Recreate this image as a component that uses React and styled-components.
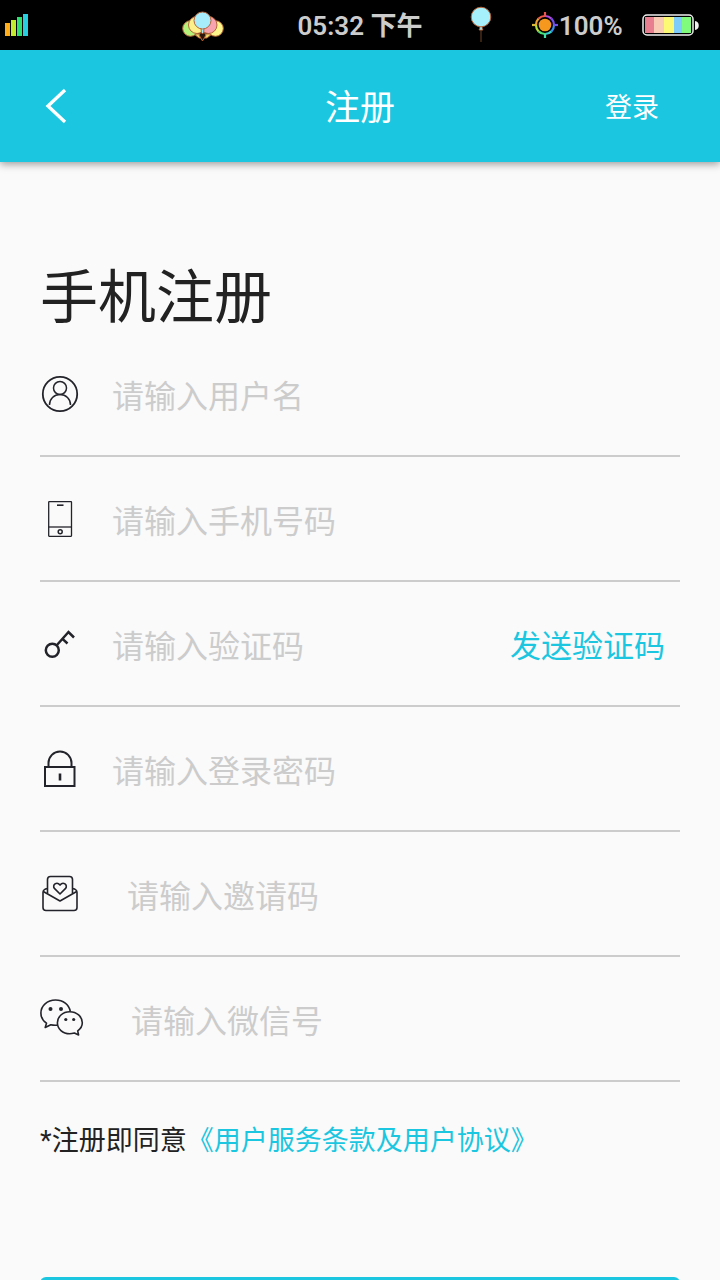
import React, { useState } from "react";
import styled, { createGlobalStyle } from "styled-components";

// ================= STYLES =================

const GlobalStyle = createGlobalStyle`
  * {
    box-sizing: border-box;
  }

  html {
    scrollbar-width: none;
  }

  body {
    margin: 0;
    background: #fafafa;
    color: #222;
    font-family: Roboto, "Noto Sans CJK SC", sans-serif;
  }

  button,
  input {
    font-family: inherit;
  }
`;

const Screen = styled.div`
  min-height: 100vh;
  display: flex;
  flex-direction: column;
  background: #fafafa;
`;

// Status bar
const StatusBar = styled.div`
  flex: none;
  height: 50px;
  display: grid;
  grid-template-columns: 1fr auto 1fr;
  align-items: center;
  background: #000;
  color: #ccc;
  font-size: 26px;
  font-weight: 600;
  line-height: 32px;
`;

const StatusLeft = styled.div`
  display: flex;
  align-items: center;
  justify-content: space-between;
  padding: 0 74px 0 4px;
`;

const StatusRight = styled.div`
  display: flex;
  align-items: center;
  justify-content: space-between;
  padding: 0 20px 0 48px;
`;

const StatusTime = styled.span`
  padding-top: 2px;
`;

const Brightness = styled.span`
  display: flex;
  align-items: center;
  gap: 1px;
  padding-left: 20px;
`;

const Glyph = styled.svg`
  display: block;
  flex: none;
`;

// Header
const Header = styled.header`
  flex: none;
  height: 112px;
  display: grid;
  grid-template-columns: 1fr auto 1fr;
  align-items: center;
  background: #1ac6e0;
  color: #fff;
  box-shadow: 0 2px 8px rgba(0, 0, 0, 0.4);
  z-index: 1;
`;

const BackButton = styled.button`
  justify-self: start;
  margin-left: 44px;
  padding: 0;
  border: none;
  background: none;
  color: inherit;
  cursor: pointer;
`;

const Title = styled.h1`
  margin: 0;
  padding-top: 5px;
  font-size: 35px;
  font-weight: 400;
  line-height: 48px;
`;

const LoginLink = styled.a`
  justify-self: end;
  margin-right: 61px;
  padding-top: 3px;
  color: inherit;
  font-size: 27px;
  line-height: 40px;
  text-decoration: none;
`;

// Form
const Form = styled.form`
  padding: 102px 40px 40px;
`;

const Heading = styled.h2`
  margin: 0;
  font-size: 58px;
  font-weight: 400;
  line-height: 68px;
`;

const Field = styled.div`
  height: 125px;
  display: flex;
  align-items: center;
  border-bottom: 2px solid #ccc;
`;

const FieldLabel = styled.label`
  flex: none;
  margin-right: ${(props) => (props.$wide ? "47px" : "32px")};
  color: #23232b;
`;

const FieldInput = styled.input`
  flex: 1;
  min-width: 0;
  height: 60px;
  padding: 6px 0 0;
  border: none;
  outline: none;
  background: none;
  color: #222;
  font-size: 32px;

  &::placeholder {
    color: #ccc;
    opacity: 1;
  }
`;

const CodeButton = styled.button`
  flex: none;
  padding: 6px 15px 0;
  border: none;
  background: none;
  color: #1ac6e0;
  font-size: 31px;
  line-height: 48px;
  cursor: pointer;
`;

const Terms = styled.p`
  margin: 39px 0 116px;
  font-size: 27px;
  line-height: 40px;
`;

const TermsLink = styled.a`
  color: #1ac6e0;
  text-decoration: none;
`;

const SubmitButton = styled.button`
  width: 100%;
  height: 88px;
  border: none;
  border-radius: 6px;
  background: #1ac6e0;
  color: #fff;
  font-size: 35px;
  cursor: pointer;
`;

// ================= ICONS =================

const SignalIcon = () => (
  <Glyph width="26" height="24" viewBox="0 0 26 24">
    <rect x="1" y="10" width="5" height="13" fill="#ffae1a" />
    <rect x="7" y="7" width="5" height="16" fill="#c4ea2e" />
    <rect x="13" y="4" width="5" height="19" fill="#2fe070" />
    <rect x="19" y="1" width="5" height="22" fill="#27cfe0" />
  </Glyph>
);

const BalloonsIcon = () => (
  <Glyph width="42" height="34" viewBox="0 0 42 34" stroke="#b5653a" strokeWidth="1">
    <path d="M12 26l5 4h8l5-4z" fill="#e9d86a" />
    <circle cx="8.500" cy="20.500" r="7.800" fill="#b4f27c" />
    <circle cx="33.500" cy="20.500" r="7.800" fill="#fdf68a" />
    <circle cx="15" cy="17" r="8.500" fill="#fdf08a" />
    <circle cx="26.500" cy="17" r="8.500" fill="#f7a3b0" />
    <path d="M19 20h3l-.5 6h-2z" fill="#a6ecfb" />
    <circle cx="20.500" cy="12.500" r="8.500" fill="#a6ecfb" />
    <path d="M17 27l2-3 1.500 2 1.500-2 2 3-3.500 6z" fill="#2b160c" />
  </Glyph>
);

const BalloonIcon = () => (
  <Glyph width="22" height="38" viewBox="0 0 22 38">
    <path d="M11 23v13" stroke="#4a2c18" strokeWidth="1.500" />
    <path d="M9 19h4l-1 3 1 2H9l1-2z" fill="#a6f0fb" stroke="#b5653a" strokeWidth="0.800" />
    <circle cx="11" cy="11" r="9.800" fill="#a6f0fb" stroke="#b5653a" strokeWidth="1" />
  </Glyph>
);

const SunIcon = () => (
  <Glyph width="26" height="26" viewBox="0 0 26 26" fill="none" strokeWidth="2.200">
    <circle cx="13" cy="13" r="6.300" fill="#f6981d" />
    <path d="M13 4a9 9 0 0 1 6.400 2.600" stroke="#b04be0" />
    <path d="M19.400 6.600A9 9 0 0 1 22 13" stroke="#7a4df0" />
    <path d="M22 13a9 9 0 0 1-2.600 6.400" stroke="#3d8cf0" />
    <path d="M19.400 19.400A9 9 0 0 1 13 22" stroke="#35cfd0" />
    <path d="M13 22a9 9 0 0 1-6.400-2.600" stroke="#4be07a" />
    <path d="M6.600 19.400A9 9 0 0 1 4 13" stroke="#b4e03c" />
    <path d="M4 13a9 9 0 0 1 2.600-6.400" stroke="#f0a030" />
    <path d="M6.600 6.600A9 9 0 0 1 13 4" stroke="#f05a4a" />
    <path d="M13 0v4" stroke="#e8554f" />
    <path d="M22 13h4" stroke="#6f52e8" />
    <path d="M13 22v4" stroke="#3fe0a8" />
    <path d="M0 13h4" stroke="#d9b838" />
  </Glyph>
);

const BatteryIcon = () => (
  <Glyph width="58" height="24" viewBox="0 0 58 24">
    <rect x="1" y="2" width="50" height="20" rx="4" fill="#000" stroke="#eee" strokeWidth="1.500" />
    <rect x="3" y="4" width="10" height="16" fill="#e87f91" />
    <rect x="12" y="4" width="11" height="16" fill="#f9cbb5" />
    <rect x="22" y="4" width="10" height="16" fill="#fcfa74" />
    <rect x="32" y="4" width="9" height="16" fill="#7dccfa" />
    <rect x="40" y="4" width="9" height="16" fill="#80fb7c" />
    <path d="M53 8c5 0 5 9 0 9z" fill="#eee" />
  </Glyph>
);

const BackIcon = () => (
  <Glyph width="26" height="38" viewBox="0 0 26 38" fill="none" stroke="currentColor" strokeWidth="3.400">
    <path d="M21 3L4 19l17 16" />
  </Glyph>
);

const UserIcon = () => (
  <Glyph width="40" height="40" viewBox="0 0 40 40" fill="none" stroke="currentColor">
    <circle cx="20" cy="20" r="17.200" strokeWidth="1.800" />
    <circle cx="20" cy="14" r="6.500" strokeWidth="1.500" />
    <path d="M9.500 31c0-6 4.500-10.400 10.500-10.400S30.500 25 30.500 31" strokeWidth="1.500" />
  </Glyph>
);

const PhoneIcon = () => (
  <Glyph width="40" height="40" viewBox="0 0 40 40" fill="none" stroke="currentColor" strokeWidth="1.300">
    <rect x="8.700" y="2.700" width="22.800" height="34.600" rx="0.500" />
    <path d="M8.700 28h22.800" />
    <path d="M17 6.200h6.500" strokeWidth="1.600" />
    <circle cx="20.200" cy="32.700" r="2" strokeWidth="1.500" />
  </Glyph>
);

const KeyIcon = () => (
  <Glyph width="40" height="40" viewBox="0 0 40 40" fill="none" stroke="currentColor" strokeWidth="2.500">
    <circle cx="12.300" cy="26.300" r="6.500" />
    <path d="M16.500 21.500L28.500 8l5.500 5.500M22.500 14.800l5 4.700" />
  </Glyph>
);

const LockIcon = () => (
  <Glyph width="40" height="40" viewBox="0 0 40 40" fill="none" stroke="currentColor" strokeWidth="2">
    <path d="M8.500 18v-4a11.500 11.500 0 0 1 23 0v4" />
    <rect x="5" y="18" width="29.500" height="19" />
    <path d="M20 24.500v7" strokeWidth="2.600" />
  </Glyph>
);

const InviteIcon = () => (
  <Glyph width="40" height="40" viewBox="0 1 40 40" fill="none" stroke="currentColor" strokeWidth="1.600" strokeLinejoin="round">
    <path d="M7.500 20.500V6.500a3 3 0 0 1 3-3h19a3 3 0 0 1 3 3v14" />
    <path d="M7.500 15.500C4.500 16 3 17.500 3 19.500v15a3 3 0 0 0 3 3h28a3 3 0 0 0 3-3v-15c0-2-1.500-3.500-4.500-4" />
    <path d="M3.300 18.500L20 28l16.700-9.500" />
    <path d="M20 21l-5.600-5.600c-2.600-3.400 2.400-7.400 5.600-3.300 3.200-4.100 8.200-.1 5.600 3.300z" />
  </Glyph>
);

const WechatIcon = () => (
  <Glyph width="44" height="40" viewBox="0 2 44 40" fill="none" stroke="currentColor" strokeWidth="1.600" strokeLinejoin="round">
    <path d="M30.300 14.300C29 7.500 23.200 3 15.500 3 7.200 3 .9 8.800.9 16c0 4.200 2 7.800 5.600 10.200L5.200 30.500l5.600-2.800c2.200.5 4.500.7 7 .3" />
    <path d="M29.700 14.800c-7 0-12.300 4.800-12.300 11s5.300 11 12.300 11c1.700 0 3.300-.4 4.700-.8l4.200 2-.9-4.200c3-2 4.600-4.800 4.600-8 0-6.200-5.600-11-12.600-11z" />
    <g fill="currentColor" stroke="none">
      <circle cx="10.500" cy="12" r="2" />
      <circle cx="21" cy="12" r="2" />
      <circle cx="25.800" cy="22.500" r="1.600" />
      <circle cx="33.700" cy="22.500" r="1.600" />
    </g>
  </Glyph>
);

// ================= COMPONENT =================

const fields = [
  { name: "username", label: "用户名", type: "text", icon: UserIcon },
  { name: "phone", label: "手机号码", type: "tel", icon: PhoneIcon },
  { name: "code", label: "验证码", type: "text", icon: KeyIcon },
  { name: "password", label: "登录密码", type: "password", icon: LockIcon },
  { name: "invite", label: "邀请码", type: "text", icon: InviteIcon, wide: true },
  { name: "wechat", label: "微信号", type: "text", icon: WechatIcon, wide: true },
];

function App() {
  const [values, setValues] = useState({});

  const handleChange = (e) => {
    setValues({ ...values, [e.target.name]: e.target.value });
  };

  return (
    <Screen lang="zh-CN">
      <GlobalStyle />

      {/* Status bar */}
      <StatusBar>
        <StatusLeft>
          <SignalIcon />
          <BalloonsIcon />
        </StatusLeft>
        <StatusTime>05:32 下午</StatusTime>
        <StatusRight>
          <BalloonIcon />
          <Brightness>
            <SunIcon />
            <StatusTime>100%</StatusTime>
          </Brightness>
          <BatteryIcon />
        </StatusRight>
      </StatusBar>

      {/* Header */}
      <Header>
        <BackButton type="button" aria-label="返回" onClick={() => window.history.back()}>
          <BackIcon />
        </BackButton>
        <Title>注册</Title>
        <LoginLink href="#login">登录</LoginLink>
      </Header>

      {/* Form */}
      <Form onSubmit={(e) => e.preventDefault()}>
        <Heading>手机注册</Heading>

        {fields.map(({ name, label, type, icon: Icon, wide }) => (
          <Field key={name}>
            <FieldLabel htmlFor={name} aria-label={label} $wide={wide}>
              <Icon />
            </FieldLabel>
            <FieldInput
              id={name}
              name={name}
              type={type}
              placeholder={`请输入${label}`}
              value={values[name] || ""}
              onChange={handleChange}
            />
            {name === "code" && <CodeButton type="button">发送验证码</CodeButton>}
          </Field>
        ))}

        <Terms>
          *注册即同意<TermsLink href="#terms">《用户服务条款及用户协议》</TermsLink>
        </Terms>

        <SubmitButton type="submit">注册</SubmitButton>
      </Form>
    </Screen>
  );
}

export default App;
